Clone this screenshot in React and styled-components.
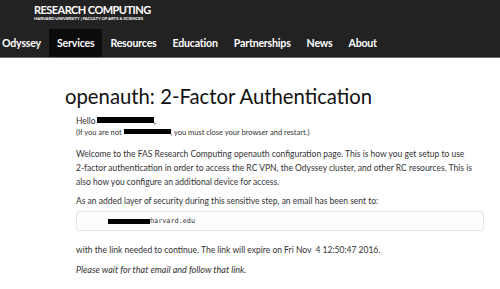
import React from "react";
import styled, { createGlobalStyle } from "styled-components";

const Global = createGlobalStyle`
  html, body { margin: 0; padding: 0; background: #fff; }
  body { font-family: Lato, "Open Sans", sans-serif; color: #333; }
`;

const Header = styled.header`
  background: #222;
  border-bottom: 1px solid #6a6a6a;
  height: 58px;
  box-sizing: border-box;
  display: flex;
  flex-direction: column;
`;

const Brand = styled.div`
  height: 29px;
  padding: 4px 0 0 34px;
  box-sizing: border-box;
  color: #fff;
  display: flex;
  flex-direction: column;
`;

const BrandTitle = styled.div`
  font-size: 11px;
  font-weight: 700;
  line-height: 11px;
  letter-spacing: -0.55px;
  white-space: nowrap;
`;

const BrandSub = styled.div`
  font-size: 4.3px;
  font-weight: 700;
  line-height: 5px;
  margin-top: 1px;
  letter-spacing: -0.05px;
  white-space: nowrap;
`;

const Nav = styled.nav`
  display: flex;
  height: 28px;
  margin-left: -6px;
`;

const NavItem = styled.a`
  display: flex;
  align-items: center;
  padding: 0 8px;
  color: #fff;
  font-size: 10.6px;
  font-weight: 700;
  letter-spacing: -0.2px;
  text-decoration: none;
  background: ${(p) => (p.$active ? "#0b0b0b" : "transparent")};
`;

const Main = styled.main`
  padding: 0 16px 0 65px;
`;

const Title = styled.h1`
  margin: 25px 0 5px;
  font-size: 20.3px;
  font-weight: 400;
  line-height: 26px;
  color: #111;
  white-space: nowrap;
`;

const Body = styled.div`
  padding-left: 11px;
  font-size: 8.5px;
  line-height: 14px;
`;

const P = styled.p`
  margin: 0 0 ${(p) => p.$mb ?? 0}px;
  max-width: 398px;
`;

const Note = styled(P)`
  font-style: italic;
  font-size: 9px;
`;

const Small = styled.p`
  margin: 0 0 10px;
  font-size: 7.5px;
  line-height: 9px;
`;

const Redact = styled.span`
  display: inline-block;
  width: ${(p) => p.$w}px;
  height: ${(p) => p.$h}px;
  margin-left: ${(p) => p.$ml ?? 0}px;
  background: #000;
  vertical-align: ${(p) => p.$va ?? 1}px;
`;

const MailBox = styled.div`
  height: 20px;
  box-sizing: border-box;
  margin: 3.3px 0 11.7px;
  width: 408px;
  border: 1px solid #e3e3e3;
  border-radius: 3px;
  background: #fdfdfd;
  display: flex;
  align-items: center;
  padding-left: 31px;
  font-family: "DejaVu Sans Mono", monospace;
  font-size: 6.8px;
  color: #333;
`;

const navItems = ["Odyssey", "Services", "Resources", "Education", "Partnerships", "News", "About"];

export default function App() {
  return (
    <>
      <Global />
      <Header>
        <Brand>
          <BrandTitle>RESEARCH COMPUTING</BrandTitle>
          <BrandSub>HARVARD UNIVERSITY | FACULTY OF ARTS &amp; SCIENCES</BrandSub>
        </Brand>
        <Nav>
          {navItems.map((n) => (
            <NavItem key={n} $active={n === "Services"}>{n}</NavItem>
          ))}
        </Nav>
      </Header>
      <Main>
        <Title>openauth: 2-Factor Authentication</Title>
        <Body>
          <P>Hello<Redact $w={57} $h={6} $ml={1} />,</P>
          <Small>(If you are not <Redact $w={47} $h={5} />, you must close your browser and restart.)</Small>
          <P $mb={5}>
            Welcome to the FAS Research Computing openauth configuration page. This is how you get setup to use
            2-factor authentication in order to access the RC VPN, the Odyssey cluster, and other RC resources. This
            is also how you configure an additional device for access.
          </P>
          <P>As an added layer of security during this sensitive step, an email has been sent to:</P>
          <MailBox>
            <Redact $w={42} $h={5} $va={0} />harvard.edu
          </MailBox>
          <P $mb={6}>with the link needed to continue. The link will expire on Fri Nov&nbsp; 4 12:50:47 2016.</P>
          <Note>Please wait for that email and follow that link.</Note>
        </Body>
      </Main>
    </>
  );
}
